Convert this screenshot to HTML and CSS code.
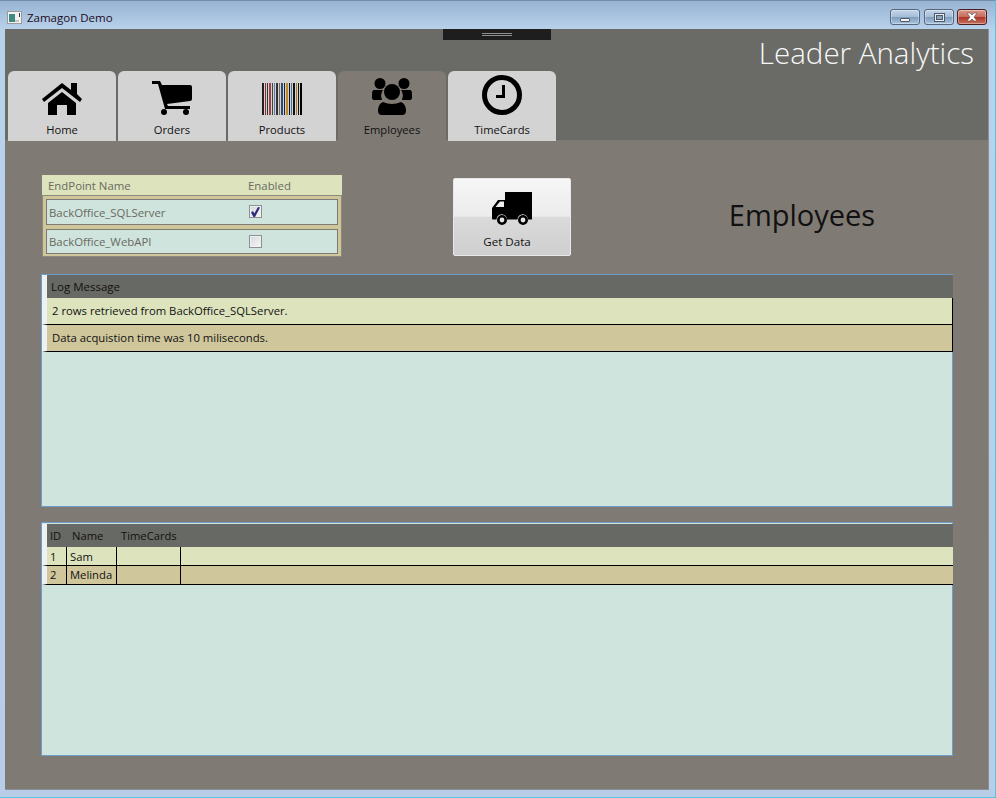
FILE: index.html
```html
<!DOCTYPE html>
<html lang="en">
<head>
<meta charset="utf-8">
<title>Zamagon Demo</title>
<link rel="stylesheet" href="styles.css">
</head>
<body>
<div class="window">
  <div class="titlebar">
    <svg class="app-icon" width="15" height="13" viewBox="0 0 15 13"><rect x="0.5" y="0.5" width="14" height="12" fill="#f2f2f2" stroke="#9a9a9a"/><rect x="2" y="3" width="6" height="8" fill="#3f8a80"/><rect x="8" y="9" width="4" height="2" fill="#c4c4c4"/><rect x="12" y="2" width="1" height="4" fill="#333"/></svg>
    <span class="title">Zamagon Demo</span>
    <div class="caption">
      <div class="cap cap-min"><span class="glyph-min"></span></div>
      <div class="cap cap-max"><span class="glyph-max"></span></div>
      <div class="cap cap-close"><svg width="14" height="10" viewBox="0 0 14 10"><path d="M2 1h3l2 2 2-2h3L9 5l3 4H9L7 7 5 9H2l3-4z" fill="#fff" stroke="#5a4a4a" stroke-width="0.6"/></svg></div>
    </div>
  </div>
  <div class="client">
    <header class="head">
      <div class="grip"><span class="grip-lines"></span></div>
      <div class="brand">Leader Analytics</div>
      <nav class="tabs">
        <div class="tab">
          <div class="tab-icon"><svg width="40" height="32" viewBox="0 0 40 32"><path d="M0 16 20 0l9 7V0h6v11l5 5-2 3L20 5 2 19z" fill="#000"/><path d="M6 20 20 9l14 11v12H25V22H15v10H6z" fill="#000"/></svg></div>
          <span class="tab-label">Home</span>
        </div>
        <div class="tab">
          <div class="tab-icon"><svg width="40" height="34" viewBox="0 0 40 34"><path d="M0 0h8l2 4h28q2 0 2 2v12q0 2-2 2l-23 3 1 2h22v3H13L6 3H0z" fill="#000"/><circle cx="12" cy="31" r="3" fill="#000"/><circle cx="34" cy="31" r="3" fill="#000"/></svg></div>
          <span class="tab-label">Orders</span>
        </div>
        <div class="tab">
          <div class="tab-icon"><svg width="40" height="32" viewBox="0 0 40 32"><g class="bars">
            <rect x="0" width="2" height="32" fill="#222"/><rect x="3" width="1" height="32" fill="#8a2a30"/><rect x="5" width="1" height="32" fill="#333"/><rect x="7" width="2" height="32" fill="#a04048"/><rect x="10" width="1" height="32" fill="#444"/><rect x="12" width="1" height="32" fill="#5a82a8"/><rect x="14" width="2" height="32" fill="#333"/><rect x="17" width="1" height="32" fill="#7a6a50"/><rect x="19" width="2" height="32" fill="#2a4a80"/><rect x="22" width="1" height="32" fill="#222"/><rect x="24" width="2" height="32" fill="#b88a30"/><rect x="27" width="1" height="32" fill="#111"/><rect x="29" width="1" height="32" fill="#4a70a0"/><rect x="31" width="2" height="32" fill="#111"/><rect x="34" width="1" height="32" fill="#a87a30"/><rect x="36" width="1" height="32" fill="#111"/><rect x="38" width="2" height="32" fill="#000"/>
          </g></svg></div>
          <span class="tab-label">Products</span>
        </div>
        <div class="tab tab-active">
          <div class="tab-icon"><svg width="40" height="37" viewBox="0 0 40 37"><circle cx="8" cy="5.500" r="5.500" fill="#000"/><circle cx="32" cy="5.500" r="5.500" fill="#000"/><path d="M2 12h9q-3 4-1 10H2q-2 0-2-2v-4q0-4 2-4zM38 12h-9q3 4 1 10h8q2 0 2-2v-4q0-4-2-4z" fill="#000"/><circle cx="20" cy="14" r="8" fill="#000"/><path d="M11 24q9 4 18 0 5 2 5 9 0 4-4 4H10q-4 0-4-4 0-7 5-9z" fill="#000"/></svg></div>
          <span class="tab-label">Employees</span>
        </div>
        <div class="tab">
          <div class="tab-icon"><svg width="40" height="40" viewBox="0 0 40 40"><circle cx="20" cy="20" r="17.500" fill="none" stroke="#000" stroke-width="5"/><path d="M20 10h3v13h-9v-3h6z" fill="#000"/></svg></div>
          <span class="tab-label">TimeCards</span>
        </div>
      </nav>
    </header>
    <main class="body">
      <section class="top">
        <div class="endpoints">
          <div class="ep-head"><span class="ep-name">EndPoint Name</span><span>Enabled</span></div>
          <div class="ep-list">
            <div class="ep-row"><span class="ep-name">BackOffice_SQLServer</span>
              <span class="check"><svg width="9" height="10" viewBox="0 0 9 10"><path d="M0 5.500 2 4l1.300 2.500L7 0l2 .5L4 10H2.500z" fill="#2a2a78"/></svg></span></div>
            <div class="ep-row"><span class="ep-name">BackOffice_WebAPI</span><span class="check"></span></div>
          </div>
        </div>
        <button class="get-data" type="button">
          <svg width="40" height="33" viewBox="0 0 40 33"><path d="M13 0h27v27.500H36a5 5 0 0 0-10.500 0H15a5 5 0 0 0-10.500 0H1q-1 0-1-1V16l6-8h7zM3.500 15H12V9.500H8z" fill="#000" fill-rule="evenodd"/><circle cx="10" cy="28" r="3.700" fill="#e4e4e4" stroke="#000" stroke-width="2.600"/><circle cx="31" cy="28" r="3.700" fill="#e4e4e4" stroke="#000" stroke-width="2.600"/></svg>
          <span class="get-label">Get Data</span>
        </button>
        <h1 class="page-title">Employees</h1>
      </section>
      <section class="panel panel-log">
        <div class="log-head">Log Message</div>
        <div class="log-row light">2 rows retrieved from BackOffice_SQLServer.</div>
        <div class="log-row tan">Data acquistion time was 10 miliseconds.</div>
      </section>
      <section class="panel panel-emp">
        <div class="emp-head"><span class="c-id">ID</span><span class="c-name">Name</span><span class="c-tc">TimeCards</span></div>
        <div class="emp-row light"><span class="c-id">1</span><span class="c-name">Sam</span><span class="c-tc"></span></div>
        <div class="emp-row tan"><span class="c-id">2</span><span class="c-name">Melinda</span><span class="c-tc"></span></div>
      </section>
    </main>
  </div>
</div>
</body>
</html>
```
FILE: styles.css
```css
* { box-sizing: border-box; }
html, body { margin: 0; height: 100%; }
body { font-family: "Open Sans", "Noto Sans", sans-serif; font-size: 11.250px; color: #111; background: #b7cde8; overflow: hidden; }
.window { width: 996px; height: 798px; display: flex; flex-direction: column; padding: 0 6px 7px 5px; border-top: 1px solid #6f8fae; border-right: 1px solid #58c3dd; border-bottom: 1px solid #58c3dd; background: linear-gradient(#98b4d2 0, #b9d2ec 29px, #b7cde8 100%); }
.titlebar { height: 28px; flex: none; display: flex; align-items: center; margin-left: 2px; padding-top: 4px; }
.app-icon { margin-right: 5px; }
.title { font-size: 11.500px; color: #1c0a1c; }
.caption { margin-left: auto; margin-right: 2px; align-self: flex-start; margin-top: 4px; display: flex; gap: 4px; }
.cap { width: 30px; height: 16px; border: 1px solid #56667c; border-radius: 3px; display: flex; align-items: center; justify-content: center; background: linear-gradient(#c3d4e8 0, #a5bdd8 50%, #7f9dbd 52%, #a9c4de 100%); box-shadow: inset 0 0 0 1px rgba(255,255,255,.35); }
.cap-close { margin-left: -1px; border-color: #4a2020; background: linear-gradient(#d99a8e 0, #c9685a 50%, #ad3529 52%, #c9705c 100%); }
.glyph-min { width: 10px; height: 4px; margin-top: 5px; background: #f4f4f4; border: 1px solid #4c5a6c; border-radius: 1px; }
.glyph-max { width: 11px; height: 9px; background: #e8eef4; border: 1px solid #4c5a6c; display: flex; align-items: center; justify-content: center; }
.glyph-max::after { content: ""; width: 5px; height: 3px; background: #8da5bf; border: 1px solid #4c5a6c; }
.client { flex: 1; display: flex; flex-direction: column; min-height: 0; border-right: 1px solid #8a8f96; border-bottom: 1px solid #8a8f96; }
.head { height: 112px; flex: none; background: #6a6b67; position: relative; display: flex; flex-direction: column; border-bottom: 1px solid #7c7a78; }
.grip { position: absolute; left: 438px; top: 0; width: 108px; height: 11px; background: #1e1e1e; display: flex; align-items: center; justify-content: center; }
.grip-lines { width: 30px; height: 3px; border-top: 1px solid #8f8f8f; border-bottom: 1px solid #8f8f8f; }
.brand { align-self: flex-end; margin: 6px 14px 0 0; height: 36px; line-height: 36px; font-size: 29.500px; font-weight: 300; color: #f8f8f8; }
.tabs { display: flex; gap: 2px; padding-left: 3px; }
.tab { width: 108px; height: 70px; background: #d3d3d3; border-radius: 6px 6px 0 0; display: flex; flex-direction: column; align-items: center; }
.tab-active { background: #807a74; }
.tab-icon { height: 44px; flex: none; display: flex; align-items: flex-end; }
.tab-icon svg { display: block; }
.tab-label { margin-top: 7px; line-height: 16px; font-size: 11.200px; color: #111; }
.body { flex: 1; min-height: 0; background: #807a74; padding: 34px 35px 0 36px; display: flex; flex-direction: column; }
.top { height: 99px; flex: none; display: flex; align-items: flex-start; }
.endpoints { width: 300px; margin-left: 1px; color: #696962; font-size: 11.400px; }
.ep-head { height: 20px; background: #dde4bd; display: flex; align-items: center; padding: 2px 0 0 6px; line-height: 18px; }
.ep-name { width: 200px; }
.ep-list { height: 62px; background: #cfc69c; border: 1px solid #8c8a7c; padding: 3px 3px 1px; display: flex; flex-direction: column; gap: 4px; }
.ep-row { height: 26px; background: #cfe4dc; border: 1px solid #7f7a74; display: flex; align-items: center; padding-left: 2px; }
.ep-row + .ep-row { height: 25px; }
.ep-row .ep-name { width: 200px; }
.check { width: 13px; height: 13px; margin-top: -1px; border: 1px solid #8e8f8f; background: linear-gradient(135deg, #d6d8e0, #f6f6f6); box-shadow: inset 0 0 0 1px #f0f0f4; display: flex; align-items: center; justify-content: center; }
.get-data { margin: 3px 0 0 111px; width: 118px; height: 78px; flex: none; padding: 13px 0 0; border: 1px solid #e8e8e8; border-radius: 2px; background: linear-gradient(#f6f6f6 0, #ececec 49%, #dadada 50%, #cfcfcf 100%); display: flex; flex-direction: column; align-items: center; font: inherit; color: #111; }
.get-data svg { display: block; }
.get-label { margin: 9px 10px 0 0; line-height: 16px; font-size: 11.600px; }
.page-title { margin: 21px 0 0; flex: 1; padding-left: 80px; text-align: center; font-size: 29px; font-weight: 400; line-height: 38px; color: #111; }
.panel { width: 912px; flex: none; background: #cfe4dc; border: 1px solid #6f9ccc; }
.panel-log { height: 233px; }
.panel-emp { height: 234px; margin-top: 15px; padding-top: 1px; }
.log-head, .emp-head { border-left: 5px solid #eef1f4; margin-right: -1px; background-clip: padding-box; background-color: #676964; color: #111; display: flex; align-items: center; font-size: 11.500px; }
.log-head { height: 23px; padding-left: 4px; }
.log-row { border-left: 5px solid #eef1f4; margin-right: -1px; height: 27px; line-height: 26px; padding-left: 5px; border-bottom: 1px solid #000; border-right: 1px solid #000; font-size: 11.300px; }
.light { background: #dde4bd; }
.tan { background: #cfc69c; }
.emp-head { height: 23px; font-size: 11.200px; }
.emp-head .c-name { padding-left: 5px; }
.emp-row { border-left: 5px solid #eef1f4; margin-right: -1px; height: 19px; display: flex; align-items: center; border-bottom: 1px solid #000; line-height: 20px; }
.emp-row.tan { line-height: 18px; }
.c-id { width: 20px; padding-left: 3px; }
.c-name { width: 50px; padding-left: 3px; }
.c-tc { width: 64px; padding-left: 4px; }
.emp-row span { height: 18px; border-right: 1px solid #000; }
```
